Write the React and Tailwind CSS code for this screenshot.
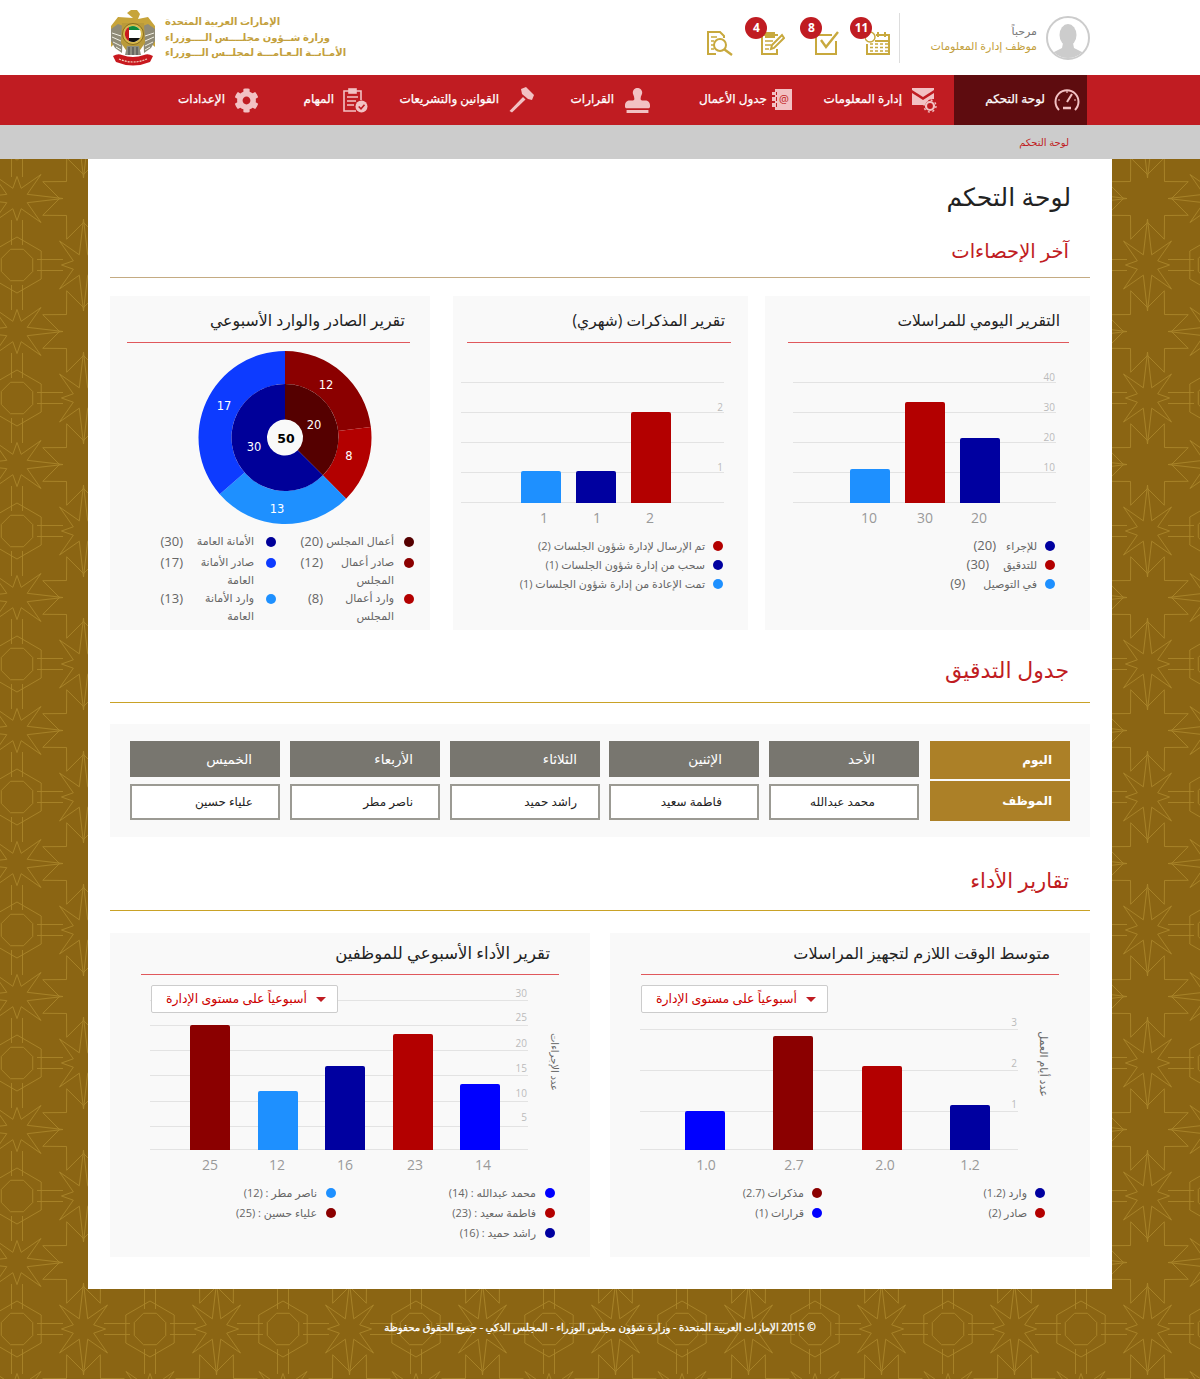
import { FaCog, FaStamp } from "react-icons/fa";

const navItems = [
  { label: "لوحة التحكم", width: "w-[133px]", pad: "pr-[7px]", gap: "gap-[9px]", icon: "gauge", active: true },
  { label: "إدارة المعلومات", width: "w-[144px]", pad: "pr-[17px]", gap: "gap-[9px]", icon: "mail" },
  { label: "جدول الأعمال", width: "w-[120px]", pad: "pr-[18px]", gap: "gap-[5px]", icon: "book" },
  { label: "القرارات", width: "w-[130px]", pad: "pr-[40px]", gap: "gap-[11px]", icon: "stamp" },
  { label: "القوانين والتشريعات", width: "w-[170px]", pad: "pr-[25px]", gap: "gap-[10px]", icon: "gavel" },
  { label: "المهام", width: "w-[105px]", pad: "pr-[22px]", gap: "gap-[9px]", icon: "clip" },
  { label: "الإعدادات", width: "w-[115px]", pad: "pr-[26px]", gap: "gap-[9px]", icon: "gear" },
];

const schedule = [
  { day: "الأحد", name: "محمد عبدالله", pad: "pr-[44px]", cell: "pr-[42px]" },
  { day: "الإثنين", name: "فاطمة سعيد", pad: "pr-[37px]", cell: "pr-[35px]" },
  { day: "الثلاثاء", name: "راشد حميد", pad: "pr-[23px]", cell: "pr-[21px]", shift: "-mr-[1px]" },
  { day: "الأربعاء", name: "ناصر مطر", pad: "pr-[27px]", cell: "pr-[25px]" },
  { day: "الخميس", name: "علياء حسين", pad: "pr-[28px]", cell: "pr-[25px]" },
];

function NavIcon({ type }) {
  const c = "#f2c1c3";
  if (type === "gauge")
    return (
      <svg width="26" height="26" viewBox="0 0 26 26" fill="none" stroke={c} strokeWidth="2">
        <path d="M5 23 A11.5 11.5 0 1 1 21 23" />
        <path d="M13 15 L18 7" />
        <path d="M9 21 H17" strokeWidth="2.5" />
        <path d="M4 13 H6 M13 4 V6 M22 13 H20" strokeWidth="1.2" />
      </svg>
    );
  if (type === "mail")
    return (
      <svg width="26" height="26" viewBox="0 0 26 26" fill={c}>
        <path d="M1 1 H23 V3 L12 10 L1 3 Z" />
        <path d="M1 6 L12 13 L23 6 V12 A8 8 0 0 0 14 18 H1 Z" />
        <circle cx="19" cy="19" r="4" fill="none" stroke={c} strokeWidth="2.2" />
        <circle cx="19" cy="19" r="6" fill="none" stroke={c} strokeWidth="1.4" strokeDasharray="2 2.7" />
      </svg>
    );
  if (type === "book")
    return (
      <svg width="20" height="22" viewBox="0 0 20 22" fill={c}>
        <path d="M3 0 H20 V21 H3 V18 H5 V14 H3 V12 H5 V8 H3 V6 H5 V3 H3 Z" />
        <path d="M0 3 H4 V6 H0 Z M0 8 H4 V12 H0 Z M0 14 H4 V18 H0 Z" />
        <text x="12" y="14" fontSize="11" fill="#c01c22" textAnchor="middle" fontFamily="Open Sans">@</text>
      </svg>
    );
  if (type === "stamp") return <FaStamp size={25} color={c} />;
  if (type === "gavel")
    return (
      <svg width="26" height="26" viewBox="0 0 26 26" fill={c}>
        <path d="M12 2 L17 0 L25 8 L23 13 L19 12 L13 7 Z" />
        <path d="M14 10 L16.5 12.5 L3 25.5 L0.5 24 Z" />
      </svg>
    );
  if (type === "clip")
    return (
      <svg width="25" height="25" viewBox="0 0 25 25" fill="none" stroke={c} strokeWidth="1.6">
        <path d="M6 3 H1 V23 H13 M13 3 H18 V12" />
        <rect x="6" y="1" width="7" height="4" fill={c} />
        <path d="M4 9 H15 M4 13 H13 M4 17 H11" />
        <circle cx="18.5" cy="18.5" r="6" fill={c} stroke="none" />
        <path d="M15.7 18.5 L18 20.8 L21.5 16.8" stroke="#c01c22" />
      </svg>
    );
  return <FaCog size={25} color={c} />;
}

function Emblem() {
  return (
    <svg width="46" height="58" viewBox="0 0 46 58">
      <path d="M23 9 L17 4 L21 1 L27 1 L30 5 L28 10 L38 8 L45 17 L45 38 L36 30 L32 14 L14 14 L9 30 L1 38 L1 17 L8 8 Z" fill="#c7a43a" />
      <path d="M1 20 L8 15 L13 17 L12 44 L5 39 L1 32 Z M45 20 L38 15 L33 17 L34 44 L41 39 L45 32 Z" fill="#8f8b78" />
      <path d="M2 24 L11 27 M2 28 L11 32 M3 33 L11 37 M6 38 L11 41 M44 24 L35 27 M44 28 L35 32 M43 33 L35 37 M40 38 L35 41" stroke="#f2f0e4" strokeWidth="1" />
      <path d="M12 14 H34 L35 34 L28 44 H18 L11 34 Z" fill="#b99a3a" />
      <path d="M17 37 L15 46 H31 L29 37 Z" fill="#8e8e80" />
      <path d="M19 38 V46 M23 38 V46 M27 38 V46" stroke="#444" strokeWidth="1" />
      <circle cx="23" cy="25" r="10.5" fill="#d7b94c" stroke="#8a6d1e" strokeWidth="1" />
      <circle cx="23" cy="25" r="8" fill="#fff" />
      <path d="M19 18 A8 8 0 0 1 30 21 H19 Z" fill="#0f8a3a" />
      <path d="M19 29 H30 A8 8 0 0 1 19 32 Z" fill="#111" />
      <path d="M19 18 V32 A8 8 0 0 1 19 18 Z" fill="#c8181e" />
      <path d="M3 47 Q8 44 12 46 Q23 50 34 46 Q38 44 43 47 L40 53 Q23 60 6 53 Z" fill="#c8181e" />
      <path d="M9 50 Q23 56 37 50" stroke="#f3d8c4" strokeWidth="1.2" strokeDasharray="2 1" fill="none" />
    </svg>
  );
}

function HeaderIcon({ type }) {
  const s = { fill: "none", stroke: "#c8a93e", strokeWidth: 2 };
  if (type === "calendar")
    return (
      <svg width="25" height="24" viewBox="0 0 25 24" {...s}>
        <path d="M11 4 H24 V23 H2 V13" />
        <path d="M13 1 V6 M20 1 V6 M10 10 H24" />
        <circle cx="5" cy="6" r="5" strokeWidth="1.5" />
        <path d="M5 13 H8 M10 13 H13 M15 13 H18 M20 13 H23 M5 16.5 H8 M10 16.5 H13 M15 16.5 H18 M20 16.5 H23 M5 20 H8 M10 20 H13 M15 20 H18 M20 20 H23" strokeWidth="1.5" />
      </svg>
    );
  if (type === "check")
    return (
      <svg width="25" height="24" viewBox="0 0 25 24" {...s}>
        <path d="M17 4 H1 V23 H21 V10" />
        <path d="M6 9 L11 16 L23 1" strokeWidth="2.4" />
      </svg>
    );
  if (type === "note")
    return (
      <svg width="25" height="24" viewBox="0 0 25 24" {...s}>
        <path d="M18 4 H2 V23 H17 V18" />
        <path d="M6 2 H14 V6 H6 Z" />
        <path d="M5 10 H13 M5 14 H11 M5 18 H9" strokeWidth="1.5" />
        <path d="M11 18 L12 14 L22 4 L24 7 L14 17 Z" />
      </svg>
    );
  return (
    <svg width="26" height="25" viewBox="0 0 26 25" {...s}>
      <path d="M9 23 H1 V1 H13 L17 5 V7" />
      <path d="M4 6 H10 M4 10 H7 M4 14 H7 M4 18 H7" strokeWidth="1.5" />
      <circle cx="13" cy="14" r="6" />
      <path d="M17.5 18.5 L25 24" strokeWidth="2.4" />
    </svg>
  );
}

function Badge({ value }) {
  return (
    <span className="absolute -top-[14px] -left-[15px] flex h-[22px] w-[22px] items-center justify-center rounded-full bg-[#c01c22] text-[12px] font-bold text-white">
      {value}
    </span>
  );
}

function Pattern() {
  const star = (cx, cy, radii, rot = 0) => {
    const pts = radii.map((d, i) => {
      const a = rot + (2 * Math.PI * i) / radii.length;
      return `${(cx + d * Math.sin(a)).toFixed(1)},${(cy - d * Math.cos(a)).toFixed(1)}`;
    });
    return `M${pts.join(" L")} Z`;
  };
  const ring = (r, n) => Array(n).fill(r);
  const arms = [46, 11, 34, 11, 22, 11, 34, 11, 46, 11, 34, 11, 22, 11, 34, 11];
  const lines = [];
  [[0, 0], [133, 0], [0, 133], [133, 133]].forEach(([x, y]) => {
    lines.push(star(x, y, ring(17, 8), Math.PI / 8));
    lines.push(star(x, y, ring(28, 6)));
    lines.push(`M${x - 5.5} ${y + 20} V${y + 45} M${x + 5.5} ${y + 20} V${y + 45} M${x - 5.5} ${y - 20} V${y - 45} M${x + 5.5} ${y - 20} V${y - 45}`);
    lines.push(`M${x + 20} ${y - 5.5} H${x + 46} M${x + 20} ${y + 5.5} H${x + 46} M${x - 20} ${y - 5.5} H${x - 46} M${x - 20} ${y + 5.5} H${x - 46}`);
  });
  lines.push(star(66.5, 0, arms));
  lines.push(star(66.5, 133, arms));
  lines.push(star(0, 66.5, arms, Math.PI / 2));
  lines.push(star(133, 66.5, arms, Math.PI / 2));
  lines.push(star(66.5, 66.5, [44, 24, 44, 24, 44, 24, 44, 24, 44, 24, 44, 24, 44, 24, 44, 24], Math.PI / 8));

  return (
    <svg className="absolute inset-0 h-full w-full" aria-hidden="true">
      <defs>
        <pattern id="tile" patternUnits="userSpaceOnUse" x="17" y="106" width="133" height="133">
          <path d={lines.join(" ")} fill="none" stroke="#a98429" strokeWidth="0.9" />
        </pattern>
      </defs>
      <rect width="100%" height="100%" fill="url(#tile)" />
    </svg>
  );
}

function SectionTitle({ children, size }) {
  return <h2 className={`pr-[21px] leading-[36px] text-[#c01c22] ${size}`}>{children}</h2>;
}

function CardTitle({ children, className, pad, size }) {
  return (
    <div className={`border-b border-[#e0585c] ${className}`}>
      <h3 className={`leading-[24px] text-[#222] ${size} ${pad}`}>{children}</h3>
    </div>
  );
}

function Bars({ box, grid, left, right, ticks, bars, labels, labelY, base, axis }) {
  const [x, y, w, h] = box;
  return (
    <svg width={w} height={h} viewBox={`${x} ${y} ${w} ${h}`} direction="ltr" className="block">
      {grid.map((g) => (
        <line key={g} x1={left} x2={right} y1={g + 0.5} y2={g + 0.5} stroke="#e3e3e3" />
      ))}
      {ticks.map((t) => (
        <text key={t.v} x={right - 1} y={t.y + 4} textAnchor="end" fontSize="10" fill="#bbb">
          {t.v}
        </text>
      ))}
      {bars.map((b) => (
        <path
          key={b.x}
          d={`M${b.x} ${base} V${b.top + 2} Q${b.x} ${b.top} ${b.x + 2} ${b.top} H${b.x + 38} Q${b.x + 40} ${b.top} ${b.x + 40} ${b.top + 2} V${base} Z`}
          fill={b.c}
        />
      ))}
      {labels.map((l) => (
        <text key={l.x} x={l.x} y={labelY + 5} textAnchor="middle" fontSize="14" fill="#999">
          {l.v}
        </text>
      ))}
      {axis && (
        <text x={axis.x} y={axis.y} textAnchor="middle" fontSize={axis.size} fill="#666" transform={`rotate(90 ${axis.x} ${axis.y})`}>
          {axis.text}
        </text>
      )}
    </svg>
  );
}

function Donut() {
  const cx = 87;
  const cy = 86.5;
  // slice edges in degrees, read off the picture
  const arc = (r0, r1, from, to) => {
    const p = (r, deg) => {
      const a = (deg * Math.PI) / 180;
      return `${(cx + r * Math.sin(a)).toFixed(2)} ${(cy - r * Math.cos(a)).toFixed(2)}`;
    };
    const big = to - from > 180 ? 1 : 0;
    return `M${p(r1, from)} A${r1} ${r1} 0 ${big} 1 ${p(r1, to)} L${p(r0, to)} A${r0} ${r0} 0 ${big} 0 ${p(r0, from)} Z`;
  };
  return (
    <svg width="174" height="174" viewBox="0 0 174 174" className="block">
      <path d={arc(53.5, 86.5, 0, 83)} fill="#8b0000" />
      <path d={arc(53.5, 86.5, 83, 135)} fill="#b30000" />
      <path d={arc(53.5, 86.5, 135, 229)} fill="#1e90ff" />
      <path d={arc(53.5, 86.5, 229, 360)} fill="#0d3bff" />
      <path d={arc(18, 53.5, 0, 135)} fill="#550000" />
      <path d={arc(18, 53.5, 135, 360)} fill="#000099" />
      <g fontSize="11.5" fill="#fff" textAnchor="middle" direction="ltr" fontFamily="'DejaVu Sans', sans-serif">
        <text x="128" y="38">12</text>
        <text x="151" y="109">8</text>
        <text x="79" y="162">13</text>
        <text x="26" y="59">17</text>
        <text x="116" y="78">20</text>
        <text x="56" y="100">30</text>
      </g>
      <text x="88" y="92" fontSize="12.5" fontWeight="700" fill="#000" textAnchor="middle" fontFamily="'DejaVu Sans', sans-serif">
        50
      </text>
    </svg>
  );
}

function Dot({ color, className = "" }) {
  return <span className={`h-[10px] w-[10px] shrink-0 rounded-full ${className}`} style={{ backgroundColor: color }} />;
}

function LegendRow({ color, children, value, valueGap = "", gap = "gap-[8px]", className = "" }) {
  return (
    <div className={`flex items-center text-[11px] leading-[19px] text-[#666] ${gap} ${className}`}>
      <Dot color={color} />
      <span>{children}</span>
      {value && <span className={`-mr-[8px] text-[13px] ${valueGap}`}>{value}</span>}
    </div>
  );
}

function PieLegendRow({ color, label, value, gap, labelWidth, className = "" }) {
  return (
    <div className={`flex items-start text-[11px] leading-[18px] text-[#666] ${className}`}>
      <Dot color={color} className="mt-[5px]" />
      <span className={`${gap} ${labelWidth} shrink-0`}>{label}</span>
      <span className="shrink-0 text-[13px]">{value}</span>
    </div>
  );
}

function Dropdown() {
  return (
    <div className="relative z-10 -mb-[28px] flex h-[28px] w-[187px] items-center gap-[9px] rounded-[2px] border border-[#ccc] bg-white pr-[11px] text-[12.5px] text-[#cc0000]">
      <span className="h-0 w-0 border-x-[5px] border-t-[5px] border-x-transparent border-t-[#c01c22]" />
      <span className="whitespace-nowrap">أسبوعياً على مستوى الإدارة</span>
    </div>
  );
}

export default function App() {
  return (
    <div dir="rtl" className="w-[1200px] font-['Open_Sans','DejaVu_Sans',sans-serif]">
      <header className="flex h-[75px] items-center bg-white pl-[110px] pr-[110px]">
        <div className="flex items-center">
          <div className="flex h-[44px] w-[44px] items-center justify-center overflow-hidden rounded-full border-2 border-[#ccc]">
            <svg width="36" height="38" viewBox="0 0 36 38" fill="#ccc" className="mt-[6px]">
              <ellipse cx="18" cy="13" rx="8.5" ry="11" />
              <path d="M13 21 H23 L24 26 L34 31 V38 H2 V31 L12 26 Z" />
            </svg>
          </div>
          <div className="mr-[9px] text-[11px] leading-[15px]">
            <div className="text-[#777]">مرحباً</div>
            <div className="text-[#c3a03c]">موظف إدارة المعلومات</div>
          </div>
        </div>
        <div className="mr-[30px] h-[50px] w-px bg-[#ddd]" />
        <div className="mr-[9px] mt-[11px] flex items-center">
          <span className="relative block h-[24px] w-[25px]"><HeaderIcon type="calendar" /><Badge value="11" /></span>
          <span className="relative mr-[25px] block h-[24px] w-[25px]"><HeaderIcon type="check" /><Badge value="8" /></span>
          <span className="relative mr-[30px] block h-[24px] w-[25px]"><HeaderIcon type="note" /><Badge value="4" /></span>
          <span className="mr-[27px] block h-[25px] w-[26px]"><HeaderIcon type="search" /></span>
        </div>
        <div className="mr-auto flex items-center gap-[9px]" dir="ltr">
          <Emblem />
          <div dir="rtl" className="text-left text-[10px] font-bold leading-[15.5px] text-[#c3a03c]">
            <div>الإمارات العربية المتحدة</div>
            <div>وزارة شــؤون مجلــــس الــــوزراء</div>
            <div>الأمـانــة الـعـامـــة لمجلــس الـــوزراء</div>
          </div>
        </div>
      </header>

      <nav className="flex h-[50px] bg-[#c01c22] pr-[113px]">
        {navItems.map((item) => (
          <a
            key={item.label}
            className={`flex h-full items-center whitespace-nowrap text-[12px] text-white [-webkit-text-stroke:0.25px_white] ${item.gap} ${item.width} ${item.pad} ${item.active ? "bg-[#5e0c0f]" : ""}`}
          >
            <span className="shrink-0">
              <NavIcon type={item.icon} />
            </span>
            <span className="mb-[2px]">{item.label}</span>
          </a>
        ))}
      </nav>

      <div className="flex h-[34px] items-center bg-[#ccc] pr-[131px] text-[10px] text-[#c01c22]">لوحة التحكم</div>

      <main className="relative bg-[#8b6513]">
        <Pattern />
        <section className="relative mx-[88px] h-[1130px] bg-white px-[22px]">
          <h1 className="h-[76px] pr-[19px] pt-[17px] text-[25px] leading-[40px] text-[#222]">لوحة التحكم</h1>

          <div className="flex h-[43px] items-end border-b border-[#c4ab82] pb-[8px]">
            <SectionTitle size="text-[19.5px]">آخر الإحصاءات</SectionTitle>
          </div>

          <div className="mt-[18px] flex h-[334px]">
            <div className="w-[325px] bg-[#f9f9f9]">
              <CardTitle className="mr-[21px] ml-[23px] h-[47px] pt-[12px]" pad="pr-[9px]" size="text-[15.5px]">التقرير اليومي للمراسلات</CardTitle>
              <Bars
                box={[765, 343, 325, 190]}
                grid={[382, 412, 442, 472, 502]}
                left={793}
                right={1056}
                base={503}
                ticks={[{ v: 40, y: 377 }, { v: 30, y: 407 }, { v: 20, y: 437 }, { v: 10, y: 467 }]}
                bars={[{ x: 850, top: 469, c: "#1e90ff" }, { x: 905, top: 402, c: "#b30000" }, { x: 960, top: 438, c: "#0000a0" }]}
                labels={[{ x: 869, v: 10 }, { x: 925, v: 30 }, { x: 979, v: 20 }]}
                labelY={518}
              />
              <div className="mt-[3px] pr-[35px]">
                <LegendRow color="#0000a0" value="(20)" valueGap="mr-[2px]">للإجراء</LegendRow>
                <LegendRow color="#b30000" value="(30)" valueGap="mr-[6px]">للتدقيق</LegendRow>
                <LegendRow color="#1e90ff" value="(9)" valueGap="mr-[10px]">في التوصيل</LegendRow>
              </div>
            </div>

            <div className="mr-[17px] w-[295px] bg-[#f9f9f9]">
              <CardTitle className="mr-[17px] ml-[14px] h-[47px] pt-[12px]" pad="pr-[6px]" size="text-[15.5px]">تقرير المذكرات (شهري)</CardTitle>
              <Bars
                box={[453, 343, 295, 190]}
                grid={[382, 412, 442, 472, 502]}
                left={461}
                right={724}
                base={503}
                ticks={[{ v: 2, y: 407 }, { v: 1, y: 467 }]}
                bars={[{ x: 521, top: 471, c: "#1e90ff" }, { x: 576, top: 471, c: "#0000a0" }, { x: 631, top: 412, c: "#b30000" }]}
                labels={[{ x: 544, v: 1 }, { x: 597, v: 1 }, { x: 650, v: 2 }]}
                labelY={518}
              />
              <div className="mt-[3px] pr-[25px]">
                <LegendRow color="#b30000">تم الإرسال لإدارة شؤون الجلسات (2)</LegendRow>
                <LegendRow color="#0000a0">سحب من إدارة شؤون الجلسات (1)</LegendRow>
                <LegendRow color="#1e90ff">تمت الإعادة من إدارة شؤون الجلسات (1)</LegendRow>
              </div>
            </div>

            <div className="mr-[23px] w-[320px] bg-[#f9f9f9]">
              <CardTitle className="mr-[20px] ml-[17px] h-[47px] pt-[12px]" pad="pr-[5px]" size="text-[15.8px]">تقرير الصادر والوارد الأسبوعي</CardTitle>
              <div className="mt-[8px] flex justify-center pl-[30px]">
                <Donut />
              </div>
              <div className="mt-[7px] flex pr-[16px]">
                <div className="w-[138px]">
                  <PieLegendRow color="#550000" gap="mr-[10px]" labelWidth="w-[71px]" label="أعمال المجلس" value="(20)" className="mb-[3px]" />
                  <PieLegendRow color="#8b0000" gap="mr-[10px]" labelWidth="w-[71px]" label="صادر أعمال المجلس" value="(12)" />
                  <PieLegendRow color="#b30000" gap="mr-[10px]" labelWidth="w-[71px]" label="وارد أعمال المجلس" value="(8)" />
                </div>
                <div className="w-[140px]">
                  <PieLegendRow color="#000099" gap="mr-[12px]" labelWidth="w-[71px]" label="الأمانة العامة" value="(30)" className="mb-[3px]" />
                  <PieLegendRow color="#0d3bff" gap="mr-[12px]" labelWidth="w-[71px]" label="صادر الأمانة العامة" value="(17)" />
                  <PieLegendRow color="#1e90ff" gap="mr-[12px]" labelWidth="w-[71px]" label="وارد الأمانة العامة" value="(13)" />
                </div>
              </div>
            </div>
          </div>

          <div className="flex h-[73px] items-end border-b border-[#c9a227] pb-[15px]">
            <SectionTitle size="text-[22px]">جدول التدقيق</SectionTitle>
          </div>

          <div className="mt-[21px] flex h-[113px] gap-[10px] bg-[#f9f9f9] px-[20px] pt-[17px]">
            <div className="ml-[1px] flex w-[140px] flex-col gap-[2px] text-[12px] font-bold text-white">
              <div className="flex h-[38px] items-center bg-[#ac8027] pr-[18px]">اليوم</div>
              <div className="flex h-[40px] items-center bg-[#ac8027] pr-[18px]">الموظف</div>
            </div>
            {schedule.map((col) => (
              <div key={col.day} className={`flex w-[150px] flex-col gap-[7px] ${col.shift || ""}`}>
                <div className={`flex h-[36px] items-center bg-[#78766f] text-[13.5px] text-white ${col.pad}`}>{col.day}</div>
                <div className={`flex h-[36px] items-center border-2 border-[#9b9a93] bg-white text-[12px] text-[#222] ${col.cell}`}>{col.name}</div>
              </div>
            ))}
          </div>

          <div className="flex h-[74px] items-end border-b border-[#c9a227] pb-[12px]">
            <SectionTitle size="text-[21px]">تقارير الأداء</SectionTitle>
          </div>

          <div className="mt-[22px] flex h-[324px] justify-between">
            <div className="w-[480px] bg-[#f9f9f9]">
              <CardTitle className="mx-[31px] h-[42px] pt-[8px]" pad="pr-[9px]" size="text-[16.1px]">متوسط الوقت اللازم لتجهيز المراسلات</CardTitle>
              <div className="mr-[262px] mt-[10px]"><Dropdown /></div>
              <Bars
                box={[610, 985, 480, 190]}
                grid={[1029, 1070, 1111, 1149]}
                left={640}
                right={1018}
                base={1150}
                ticks={[{ v: 3, y: 1022 }, { v: 2, y: 1063 }, { v: 1, y: 1104 }]}
                bars={[{ x: 685, top: 1111, c: "#0000ff" }, { x: 773, top: 1036, c: "#8b0000" }, { x: 862, top: 1066, c: "#b30000" }, { x: 950, top: 1105, c: "#0000a0" }]}
                labels={[{ x: 706, v: "1.0" }, { x: 794, v: "2.7" }, { x: 885, v: "2.0" }, { x: 970, v: "1.2" }]}
                labelY={1165}
                axis={{ x: 1040, y: 1064, size: 11, text: "عدد أيام العمل" }}
              />
              <div className="mt-[8px] flex pr-[45px]">
                <div className="w-[223px]">
                  <LegendRow color="#0000a0" className="mb-[1px]">وارد (1.2)</LegendRow>
                  <LegendRow color="#b30000">صادر (2)</LegendRow>
                </div>
                <div>
                  <LegendRow color="#8b0000" className="mb-[1px]">مذكرات (2.7)</LegendRow>
                  <LegendRow color="#0000ff">قرارات (1)</LegendRow>
                </div>
              </div>
            </div>

            <div className="w-[480px] bg-[#f9f9f9]">
              <CardTitle className="mx-[31px] h-[42px] pt-[8px]" pad="pr-[9px]" size="text-[16.5px]">تقرير الأداء الأسبوعي للموظفين</CardTitle>
              <div className="mr-[252px] mt-[10px]"><Dropdown /></div>
              <Bars
                box={[110, 985, 480, 190]}
                grid={[1000, 1025, 1050, 1075, 1101, 1126, 1149]}
                left={150}
                right={528}
                base={1150}
                ticks={[{ v: 30, y: 993 }, { v: 25, y: 1017 }, { v: 20, y: 1043 }, { v: 15, y: 1068 }, { v: 10, y: 1093 }, { v: 5, y: 1117 }]}
                bars={[{ x: 190, top: 1025, c: "#8b0000" }, { x: 258, top: 1091, c: "#1e90ff" }, { x: 325, top: 1066, c: "#0000a0" }, { x: 393, top: 1034, c: "#b30000" }, { x: 460, top: 1084, c: "#0000ff" }]}
                labels={[{ x: 210, v: 25 }, { x: 277, v: 12 }, { x: 345, v: 16 }, { x: 415, v: 23 }, { x: 483, v: 14 }]}
                labelY={1165}
                axis={{ x: 551, y: 1062, size: 10, text: "عدد الإجراءات" }}
              />
              <div className="mt-[8px] flex pr-[35px]">
                <div className="w-[219px]">
                  <LegendRow color="#0000ff" gap="gap-[9px]" className="mb-[1px]">محمد عبدالله : (14)</LegendRow>
                  <LegendRow color="#b30000" gap="gap-[9px]" className="mb-[1px]">فاطمة سعيد : (23)</LegendRow>
                  <LegendRow color="#0000a0" gap="gap-[9px]">راشد حميد : (16)</LegendRow>
                </div>
                <div>
                  <LegendRow color="#1e90ff" gap="gap-[9px]" className="mb-[1px]">ناصر مطر : (12)</LegendRow>
                  <LegendRow color="#8b0000" gap="gap-[9px]">علياء حسين : (25)</LegendRow>
                </div>
              </div>
            </div>
          </div>
        </section>

        <footer className="relative flex h-[90px] items-start justify-center pt-[29px] text-[10.2px] leading-[18px] text-white [-webkit-text-stroke:0.3px_white]">
          © 2015 الإمارات العربية المتحدة - وزارة شؤون مجلس الوزراء - المجلس الذكي - جميع الحقوق محفوظة
        </footer>
      </main>
    </div>
  );
}
